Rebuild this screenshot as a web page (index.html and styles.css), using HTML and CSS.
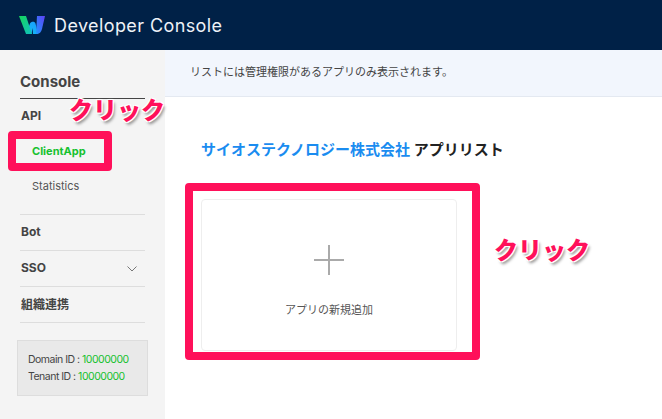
FILE: index.html
```html
<!DOCTYPE html>
<html lang="ja">
<head>
  <meta charset="UTF-8">
  <title>Developer Console</title>
  <link rel="stylesheet" href="styles.css">
</head>
<body>

  <header class="topbar">
    <svg class="logo" width="26" height="20" viewBox="0 0 26 20">
      <defs>
        <linearGradient id="logoLeft" x1="0" y1="0" x2="1" y2="1">
          <stop offset="0" stop-color="#16d65a"/>
          <stop offset="1" stop-color="#10c0c0"/>
        </linearGradient>
        <linearGradient id="logoMid" x1="0" y1="1" x2="1" y2="0">
          <stop offset="0" stop-color="#12bdf0"/>
          <stop offset="1" stop-color="#1b9cff"/>
        </linearGradient>
        <linearGradient id="logoRight" x1="0" y1="1" x2="1" y2="0">
          <stop offset="0" stop-color="#1f96ff"/>
          <stop offset="1" stop-color="#5f40f5"/>
        </linearGradient>
      </defs>
      <path d="M7 19L11 8.500C12 6 16 6 16.500 8.500L19 19H14L13.500 13L12.500 19Z" fill="url(#logoMid)"/>
      <path d="M0 1H7L13 19H7Z" fill="url(#logoLeft)"/>
      <path d="M18 1H26L23 14C22.300 17 20.500 19 17 19Z" fill="url(#logoRight)"/>
    </svg>
    <span class="topbar-title">Developer Console</span>
  </header>

  <div class="layout">
    <aside class="sidebar">
      <div class="sidebar-title">Console</div>

      <div class="nav-group">
        <div class="nav-head">API</div>
        <a class="nav-sub active">ClientApp</a>
        <a class="nav-sub">Statistics</a>
      </div>
      <div class="nav-item">Bot</div>
      <div class="nav-item">
        SSO
        <svg class="chevron" width="10" height="6" viewBox="0 0 10 6"><path d="M.5.5L5 5 9.500.5" fill="none" stroke="#777" stroke-width="1"/></svg>
      </div>
      <div class="nav-item">組織連携</div>

      <div class="id-box">
        <div>Domain ID : <span class="id-value">10000000</span></div>
        <div>Tenant ID : <span class="id-value">10000000</span></div>
      </div>
    </aside>

    <main class="content">
      <div class="notice">リストには管理権限があるアプリのみ表示されます。</div>

      <h2 class="list-title"><span class="company">サイオステクノロジー株式会社</span> アプリリスト</h2>

      <div class="app-card">
        <svg width="30" height="30" viewBox="0 0 30 30"><path d="M15 0V30M0 15H30" stroke="#aaa" stroke-width="2"/></svg>
        <span class="app-card-label">アプリの新規追加</span>
      </div>
    </main>
  </div>

  <!-- screenshot annotations -->
  <div class="mark mark-client"></div>
  <div class="mark mark-card"></div>
  <span class="click-note note-client">クリック</span>
  <span class="click-note note-card">クリック</span>

</body>
</html>
```

FILE: styles.css
```css
* {
  box-sizing: border-box;
}
body {
  margin: 0;
  width: 662px;
  height: 419px;
  overflow: hidden;
  position: relative;
  background-color: white;
  font-family: Inter, "Noto Sans CJK JP", sans-serif;
  color: #333;
}
.topbar {
  height: 50px;
  background-color: #002147;
  display: flex;
  align-items: center;
  padding-left: 19px;
  gap: 9px;
}
.topbar-title {
  color: #eef2f7;
  font-size: 18px;
  letter-spacing: 0.4px;
}
.layout {
  display: flex;
  height: 369px;
}
.sidebar {
  width: 165px;
  background-color: #f4f4f4;
  padding: 22px 20px 0;
  flex-shrink: 0;
}
.sidebar-title {
  font-size: 15px;
  font-weight: 700;
  color: #444;
  height: 27px;
  line-height: 20px;
  border-bottom: 1px solid #444;
}
.nav-group {
  height: 116px;
  border-bottom: 1px solid #ddd;
}
.nav-head {
  font-size: 12px;
  font-weight: 700;
  color: #444;
  padding-left: 1px;
  height: 35px;
  line-height: 34px;
}
.nav-sub {
  display: block;
  font-size: 11px;
  color: #555;
  padding-left: 12px;
  height: 35px;
  line-height: 34px;
}
.nav-sub.active {
  color: #17c12f;
  font-weight: 700;
}
.nav-item {
  height: 36px;
  border-bottom: 1px solid #ddd;
  font-size: 12px;
  font-weight: 700;
  color: #444;
  padding: 0 8px 2px 1px;
  display: flex;
  align-items: center;
  justify-content: space-between;
}
.chevron {
  margin-top: 3px;
}
.id-box {
  margin: 17px -3px 0;
  height: 56px;
  background-color: #e9e9e9;
  border: 1px solid #ddd;
  padding: 10px 10px;
  font-size: 10.500px;
  line-height: 17px;
  letter-spacing: -0.5px;
  color: #444;
}
.id-value {
  color: #17c12f;
}
.content {
  flex: 1;
}
.notice {
  height: 47px;
  background-color: #f2f6fd;
  border-bottom: 1px solid #e4e9f1;
  padding-left: 25px;
  font-size: 11px;
  line-height: 44px;
  color: #444;
}
.list-title {
  margin: 43px 0 0 36px;
  font-size: 15px;
  line-height: 20px;
  font-weight: 700;
  color: #222;
}
.company {
  color: #1a8cf0;
}
.app-card {
  margin: 39px 0 0 36px;
  width: 256px;
  height: 152px;
  background-color: white;
  border: 1px solid #eee;
  border-radius: 4px;
  display: flex;
  flex-direction: column;
  align-items: center;
  padding-top: 45px;
}
.app-card-label {
  margin-top: 26px;
  font-size: 11px;
  color: #555;
}
.mark {
  position: absolute;
  border: 8px solid #ff105a;
  border-radius: 4px;
}
.mark-client {
  left: 8px;
  top: 131px;
  width: 104px;
  height: 40px;
}
.mark-card {
  left: 185px;
  top: 183px;
  width: 295px;
  height: 177px;
}
.click-note {
  position: absolute;
  font-size: 24px;
  line-height: 28px;
  font-weight: 900;
  color: #ff105a;
  text-shadow: 0 0 2px white, 1px 1px 0 white, -1px -1px 0 white, 1px -1px 0 white, -1px 1px 0 white, 2px 3px 3px rgba(0, 0, 0, 0.4);
}
.note-client {
  left: 69px;
  top: 97px;
}
.note-card {
  left: 494px;
  top: 237px;
}
```
